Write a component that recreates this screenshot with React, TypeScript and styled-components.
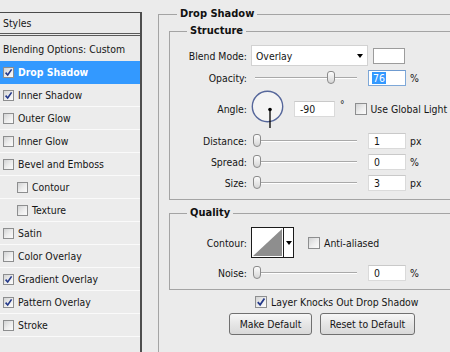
import React from "react";
import styled, { createGlobalStyle } from "styled-components";

const Global = createGlobalStyle`
  html, body { margin: 0; padding: 0; background: #ebebeb; }
  body {
    font-family: "DejaVu Sans Condensed", "DejaVu Sans", sans-serif;
    font-stretch: condensed;
    font-size: 10.4px;
    color: #151515;
  }
  * { box-sizing: border-box; }
`;

const Dialog = styled.div`
  display: flex;
  width: 450px;
  height: 352px;
  overflow: hidden;
  background: #ebebeb;
`;

/* ---------- left styles list ---------- */
const LeftPanel = styled.div`
  flex: 0 0 142px;
  margin-top: 12px;
  border-top: 1px solid #4a4a4a;
  border-right: 2px solid #4e4e4e;
  display: flex;
  flex-direction: column;
`;

const PanelHeader = styled.div`
  height: 21px;
  display: flex;
  align-items: center;
  padding-left: 3px;
  border-bottom: 1px solid #5a5a5a;
`;

const List = styled.div`
  margin-top: 1px;
  border-top: 1px solid #5a5a5a;
  display: flex;
  flex-direction: column;
`;

const BlendRow = styled.div`
  height: 25px;
  display: flex;
  align-items: center;
  padding-left: 3px;
`;

const StyleRow = styled.div<{ $indent?: boolean; $selected?: boolean }>`
  height: 23px;
  display: flex;
  align-items: center;
  gap: 4px;
  padding-left: ${(p) => (p.$indent ? 17 : 3)}px;
  border-bottom: 1px solid ${(p) => (p.$selected ? "#3399ff" : "#fafafa")};
  background: ${(p) => (p.$selected ? "#3399ff" : "#ececec")};
  color: ${(p) => (p.$selected ? "#fff" : "#151515")};
  font-weight: ${(p) => (p.$selected ? "bold" : "normal")};
`;

const Box = styled.span<{ $size: number }>`
  flex: 0 0 auto;
  width: ${(p) => p.$size}px;
  height: ${(p) => p.$size}px;
  border: 1px solid #8d8e8f;
  background: linear-gradient(135deg, #d2d3d4 0%, #eeeeee 55%, #fbfbfb 100%);
  display: flex;
  align-items: center;
  justify-content: center;
`;

const Check: React.FC<{ on?: boolean; size?: number }> = ({ on, size = 11 }) => (
  <Box $size={size}>
    {on && (
      <svg width={size - 2} height={size - 2} viewBox="0 0 9 9">
        <path d="M1.6 4.6 L3.7 7 L7.6 1.4" fill="none" stroke="#24398a" strokeWidth="1.6" />
      </svg>
    )}
  </Box>
);

/* ---------- right options ---------- */
const RightArea = styled.div`
  flex: 1 1 auto;
  min-width: 0;
  padding-left: 16px;
`;

const Group = styled.fieldset<{ $mt: number; $pl: number; $pb: number; $w?: number }>`
  margin: ${(p) => p.$mt}px 0 0 0;
  padding: 0 0 ${(p) => p.$pb}px ${(p) => p.$pl}px;
  border: 1px solid #a4a4a4;
  min-width: 0;
  width: ${(p) => (p.$w ? `${p.$w}px` : "auto")};
  display: flex;
  flex-direction: column;
`;

const Legend = styled.legend<{ $ml: number }>`
  margin-left: ${(p) => p.$ml}px;
  padding: 0 3px;
  line-height: 14px;
  font-weight: bold;
  font-size: 11px;
  color: #111;
`;

const FormRow = styled.div<{ $h: number; $mt: number }>`
  display: flex;
  align-items: center;
  height: ${(p) => p.$h}px;
  margin-top: ${(p) => p.$mt}px;
`;

const Label = styled.span`
  flex: 0 0 77px;
  text-align: right;
  margin-right: 4px;
`;

const Select = styled.div`
  width: 117px;
  height: 21px;
  border: 1px solid #d2d2d2;
  background: #fff;
  display: flex;
  align-items: center;
  padding-left: 4px;
`;

const Arrow = styled.span`
  width: 0;
  height: 0;
  border-left: 3.5px solid transparent;
  border-right: 3.5px solid transparent;
  border-top: 4px solid #000;
  margin-left: auto;
  margin-right: 4px;
`;

const Swatch = styled.div`
  margin-left: 5px;
  width: 32px;
  height: 16px;
  border: 1px solid #9c9c9c;
  background: #fff;
`;

const Slider = styled.div`
  position: relative;
  flex: 0 0 106px;
  height: 16px;
  background:
    linear-gradient(#a9a9a9, #a9a9a9) 4px 7px / 102px 1px no-repeat,
    linear-gradient(#ffffff, #ffffff) 4px 8px / 102px 1px no-repeat;
`;

const Thumb = styled.span<{ $pos: number }>`
  position: absolute;
  top: 1px;
  left: ${(p) => p.$pos}px;
  width: 8px;
  height: 13px;
  border: 1px solid #8b8b8b;
  border-radius: 3px 3px 4px 4px;
  background: linear-gradient(#fcfcfc, #d6d6d6);
`;

const Field = styled.div<{ $w: number; $focus?: boolean; $ml?: number }>`
  flex: 0 0 ${(p) => p.$w}px;
  height: 16px;
  margin-left: ${(p) => p.$ml ?? 0}px;
  border: 1px solid ${(p) => (p.$focus ? "#7ea8d8" : "#dadada")};
  border-top-color: ${(p) => (p.$focus ? "#6f9bd0" : "#c9c9c9")};
  background: #fff;
  display: flex;
  align-items: center;
  padding-left: 5px;
`;

const Selected = styled.span`
  background: #3399ff;
  color: #fff;
  line-height: 12px;
  padding: 0 1px;
  margin-left: -2px;
`;

const Unit = styled.span`
  margin-left: 4px;
`;

const SliderGap = styled.span`
  flex: 0 0 11px;
`;

const Degree = styled.span`
  align-self: flex-start;
  margin-top: 9px;
  margin-left: 5px;
  font-size: 10px;
`;

const CheckLabel = styled.label<{ $ml: number }>`
  display: flex;
  align-items: center;
  gap: 4px;
  margin-left: ${(p) => p.$ml}px;
  white-space: nowrap;
`;

const ContourBox = styled.div`
  width: 43px;
  height: 31px;
  border: 1px solid #1b1b1b;
  display: flex;
  background: #fff;
`;

const ContourArrow = styled.div`
  flex: 1;
  border-left: 1px solid #1b1b1b;
  display: flex;
  align-items: center;
  justify-content: center;
`;

const SmallArrow = styled.span`
  width: 0;
  height: 0;
  border-left: 3px solid transparent;
  border-right: 3px solid transparent;
  border-top: 4px solid #000;
`;

const KnockRow = styled.div`
  display: flex;
  align-items: center;
  gap: 4px;
  height: 14px;
  margin-top: 5px;
  padding-left: 86px;
`;

const ButtonRow = styled.div`
  display: flex;
  gap: 8px;
  margin-top: 4px;
  padding-left: 60px;
`;

const Button = styled.button<{ $w: number }>`
  width: ${(p) => p.$w}px;
  height: 22px;
  border: 1px solid #707070;
  border-radius: 3px;
  background: linear-gradient(#f7f7f7, #e6e6e6 50%, #d9d9d9);
  font: inherit;
  color: #151515;
  padding: 0;
`;

const Dial = () => (
  <svg width="34" height="39" viewBox="0 0 34 39">
    <circle cx="16.5" cy="16.5" r="15.2" fill="#f4f4f4" stroke="#56679b" strokeWidth="1.4" />
    <line x1="19" y1="19.5" x2="19" y2="38" stroke="#000" strokeWidth="1.3" />
    <circle cx="19" cy="19.5" r="1.8" fill="#000" />
  </svg>
);

const ContourPreview = () => (
  <svg width="31" height="29" viewBox="0 0 31 29">
    <rect x="0" y="0" width="31" height="29" fill="#fff" />
    <polygon points="1,28 30,1 30,28" fill="#8e8e8e" />
  </svg>
);

const styles: { name: string; on?: boolean; indent?: boolean; selected?: boolean }[] = [
  { name: "Drop Shadow", on: true, selected: true },
  { name: "Inner Shadow", on: true },
  { name: "Outer Glow" },
  { name: "Inner Glow" },
  { name: "Bevel and Emboss" },
  { name: "Contour", indent: true },
  { name: "Texture", indent: true },
  { name: "Satin" },
  { name: "Color Overlay" },
  { name: "Gradient Overlay", on: true },
  { name: "Pattern Overlay", on: true },
  { name: "Stroke" },
];

const thumbPos = (v: number) => 2 + (v / 100) * 98;

const SliderField: React.FC<{
  label: string;
  value: string;
  pct: number;
  unit: string;
  mt: number;
  focus?: boolean;
}> = ({ label, value, pct, unit, mt, focus }) => (
  <FormRow $h={16} $mt={mt}>
    <Label>{label}</Label>
    <Slider>
      <Thumb $pos={thumbPos(pct)} />
    </Slider>
    <SliderGap />
    <Field $w={38} $focus={focus}>
      {focus ? <Selected>{value}</Selected> : value}
    </Field>
    <Unit>{unit}</Unit>
  </FormRow>
);

export default function App() {
  return (
    <Dialog>
      <Global />
      <LeftPanel>
        <PanelHeader>Styles</PanelHeader>
        <List>
          <BlendRow>Blending Options: Custom</BlendRow>
          {styles.map((s) => (
            <StyleRow key={s.name} $indent={s.indent} $selected={s.selected}>
              <Check on={s.on} />
              {s.name}
            </StyleRow>
          ))}
        </List>
      </LeftPanel>

      <RightArea>
        <Group $mt={7} $pl={10} $pb={40} $w={340}>
          <Legend $ml={8}>Drop Shadow</Legend>

          <Group $mt={3} $pl={0} $pb={8}>
            <Legend $ml={17}>Structure</Legend>
            <FormRow $h={21} $mt={7}>
              <Label>Blend Mode:</Label>
              <Select>
                Overlay
                <Arrow />
              </Select>
              <Swatch />
            </FormRow>
            <SliderField label="Opacity:" value="76" pct={76} unit="%" mt={4} focus />
            <FormRow $h={38} $mt={4}>
              <Label>Angle:</Label>
              <Dial />
              <Field $w={41} $ml={9}>-90</Field>
              <Degree>°</Degree>
              <CheckLabel $ml={10}>
                <Check size={12} />
                Use Global Light
              </CheckLabel>
            </FormRow>
            <SliderField label="Distance:" value="1" pct={0} unit="px" mt={5} />
            <SliderField label="Spread:" value="0" pct={0} unit="%" mt={5} />
            <SliderField label="Size:" value="3" pct={0} unit="px" mt={5} />
          </Group>

          <Group $mt={6} $pl={0} $pb={8}>
            <Legend $ml={17}>Quality</Legend>
            <FormRow $h={31} $mt={7}>
              <Label>Contour:</Label>
              <ContourBox>
                <ContourPreview />
                <ContourArrow>
                  <SmallArrow />
                </ContourArrow>
              </ContourBox>
              <CheckLabel $ml={14}>
                <Check size={12} />
                Anti-aliased
              </CheckLabel>
            </FormRow>
            <SliderField label="Noise:" value="0" pct={0} unit="%" mt={7} />
          </Group>

          <KnockRow>
            <Check on size={12} />
            Layer Knocks Out Drop Shadow
          </KnockRow>
          <ButtonRow>
            <Button $w={83}>Make Default</Button>
            <Button $w={95}>Reset to Default</Button>
          </ButtonRow>
        </Group>
      </RightArea>
    </Dialog>
  );
}
